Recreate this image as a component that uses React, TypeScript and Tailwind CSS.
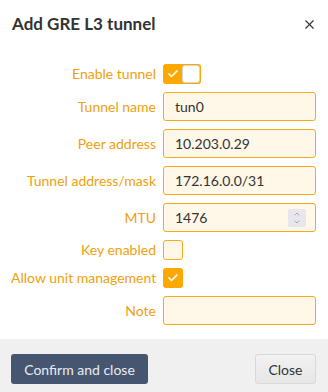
import { X, Check, ChevronUp, ChevronDown } from "lucide-react";

const Field = ({ label, children }: { label: string; children: React.ReactNode }) => (
  <>
    <label className="text-right text-[14px] leading-none text-[#f0a00c] whitespace-nowrap">{label}</label>
    <div className="flex items-center">{children}</div>
  </>
);

const TextInput = ({ value }: { value: string }) => (
  <div className="flex h-[29px] w-full items-center rounded-[3px] border border-[#f7aa1c] bg-[#fff7e8] px-[11px] text-[14px] text-[#333]">
    {value}
  </div>
);

const App = () => {
  return (
    <div className="flex h-[392px] w-[328px] flex-col bg-white font-['Lato',sans-serif]">
      {/* Header */}
      <div className="flex h-[48px] items-center justify-between pl-[12px] pr-[11px]">
        <h2 className="text-[17px] font-bold text-[#333]">Add GRE L3 tunnel</h2>
        <X size={15} strokeWidth={1.8} className="text-[#333]" />
      </div>

      {/* Form */}
      <div className="grid grid-cols-[145px_1fr] items-center gap-x-[7px] gap-y-[8px] pl-[11px] pr-[12px] pt-[16px] pb-[14px]">
        <Field label="Enable tunnel">
          <div className="flex h-[20px] w-[38px] items-center rounded-[3px] bg-[#fba900] p-[1px]">
            <div className="flex w-[18px] justify-center">
              <Check size={12} strokeWidth={3.5} className="text-white" />
            </div>
            <div className="h-[18px] w-[18px] rounded-[3px] border border-[#d6d6d6] bg-white" />
          </div>
        </Field>
        <Field label="Tunnel name">
          <TextInput value="tun0" />
        </Field>
        <Field label="Peer address">
          <TextInput value="10.203.0.29" />
        </Field>
        <Field label="Tunnel address/mask">
          <TextInput value="172.16.0.0/31" />
        </Field>
        <Field label="MTU">
          <div className="flex h-[29px] w-full items-center justify-between rounded-[3px] border border-[#f7aa1c] bg-[#fff7e8] pl-[11px] pr-[9px] text-[14px] text-[#333]">
            <span>1476</span>
            <div className="flex h-[18px] w-[18px] flex-col items-center justify-center rounded-[2px] bg-[#e6e6ec] text-[#999]">
              <ChevronUp size={8} strokeWidth={2.5} />
              <ChevronDown size={8} strokeWidth={2.5} />
            </div>
          </div>
        </Field>
        <Field label="Key enabled">
          <div className="h-[20px] w-[20px] rounded-[3px] border border-[#f7aa1c] bg-[#fff7e8]" />
        </Field>
        <Field label="Allow unit management">
          <div className="flex h-[20px] w-[20px] items-center justify-center rounded-[3px] bg-[#fba900]">
            <Check size={12} strokeWidth={3.5} className="text-white" />
          </div>
        </Field>
        <Field label="Note">
          <TextInput value="" />
        </Field>
      </div>

      {/* Footer */}
      <div className="flex flex-1 items-start justify-between bg-[#f0f0f0] pl-[11px] pr-[12px] pt-[15px]">
        <button className="h-[30px] w-[137px] rounded-[3px] bg-[#475670] text-[14px] text-[#e9edf3]">
          Confirm and close
        </button>
        <button className="h-[30px] w-[61px] rounded-[3px] border border-[#d8d8d8] bg-gradient-to-b from-[#f2f2f2] to-[#e6e6e6] text-[14px] text-[#333]">
          Close
        </button>
      </div>
    </div>
  );
};

export default App;
